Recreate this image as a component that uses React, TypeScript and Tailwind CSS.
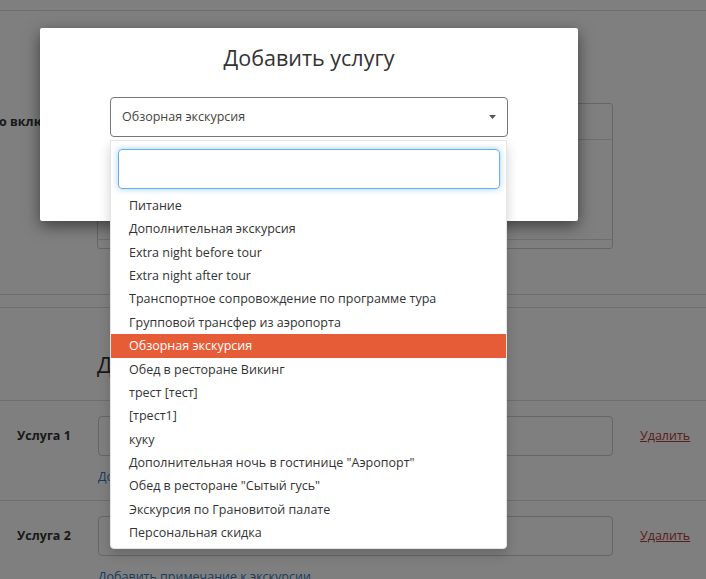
import React from 'react';

const options = [
  'Питание',
  'Дополнительная экскурсия',
  'Extra night before tour',
  'Extra night after tour',
  'Транспортное сопровождение по программе тура',
  'Групповой трансфер из аэропорта',
  'Обзорная экскурсия',
  'Обед в ресторане Викинг',
  'трест [тест]',
  '[трест1]',
  'куку',
  'Дополнительная ночь в гостинице "Аэропорт"',
  'Обед в ресторане "Сытый гусь"',
  'Экскурсия по Грановитой палате',
  'Персональная скидка',
];

const selected = 'Обзорная экскурсия';

const ServiceRow = ({ label, first }: { label: string; first?: boolean }) => (
  <div className={`border-b border-[#dddddd] ${first ? 'h-[100px]' : 'h-[80px]'} pt-[15px]`}>
    <div className="flex items-center h-[40px]">
      <div className="w-[98px] pl-[17px] font-bold text-[12.5px] text-[#333]">{label}</div>
      <div className="w-[515px] h-[40px] border border-[#ccc] rounded-[4px]" />
      <a className="ml-[27px] text-[12.5px] text-[#b33c3c] underline">Удалить</a>
    </div>
    <div className="pl-[98px] mt-[12px] text-[12.5px] text-[#337ab7]">Добавить примечание к экскурсии</div>
  </div>
);

const App = () => {
  return (
    <div className="relative w-[706px] h-[579px] overflow-hidden bg-white font-['Open_Sans',sans-serif] text-[#333]">
      {/* page behind the modal */}
      <div className="h-[11px] border-b border-[#dddddd]" />
      <div className="flex pt-[92px]">
        <div className="w-[97px] shrink-0 pt-[10px] overflow-hidden">
          <div className="-ml-[17px] whitespace-nowrap font-bold text-[12.5px]">Что включено</div>
        </div>
        <div className="w-[516px] h-[146px] border border-[#cccccc] rounded-[3px] flex flex-col">
          <div className="h-[36px] border-b border-[#dddddd]" />
          <div className="flex-1 border-b border-[#dddddd]" />
          <div className="h-[8px]" />
        </div>
      </div>
      <div className="mt-[45px] h-[14px] border-t border-b border-[#dddddd]" />
      <div className="h-[93px] border-b border-[#dddddd] pl-[97px] pt-[41px]">
        <div className="text-[22px] leading-[30px]">Дополнительные услуги</div>
      </div>
      <ServiceRow label="Услуга 1" first />
      <ServiceRow label="Услуга 2" />

      {/* backdrop */}
      <div className="absolute inset-0 bg-black/50" />

      {/* modal */}
      <div className="absolute left-[40px] top-[28px] w-[538px] h-[193px] bg-white rounded-[2px] shadow-[0_5px_15px_rgba(0,0,0,0.5)] flex flex-col items-center pt-[15px]">
        <h2 className="text-[21.5px] leading-[30px] text-[#333]">Добавить услугу</h2>
        <div className="mt-[24px] w-[398px] h-[40px] border border-[#777] rounded-[4px] flex items-center justify-between pl-[11px] pr-[10px]">
          <span className="text-[12.5px] text-[#444]">{selected}</span>
          <svg width="7" height="4" viewBox="0 0 7 4" className="mr-[1px]">
            <path d="M0 0 L7 0 L3.5 4 Z" fill="#555" />
          </svg>
        </div>
      </div>

      {/* dropdown */}
      <div className="absolute left-[110px] top-[140px] w-[397px] h-[409px] bg-white rounded-b-[4px] border border-[#e5e5e5] shadow-[0_6px_12px_rgba(0,0,0,0.18)]">
        <div className="ml-[7px] mt-[8px] w-[382px] h-[40px] border border-[#66afe9] rounded-[4px] shadow-[0_0_6px_rgba(102,175,233,0.6)]" />
        <ul className="mt-[5px]">
          {options.map((opt) => (
            <li
              key={opt}
              className={`h-[23.36px] leading-[23.36px] pl-[18px] text-[12.5px] whitespace-nowrap ${
                opt === selected ? 'bg-[#e65c36] text-white' : 'text-[#333]'
              }`}
            >
              {opt}
            </li>
          ))}
        </ul>
      </div>
    </div>
  );
};

export default App;
